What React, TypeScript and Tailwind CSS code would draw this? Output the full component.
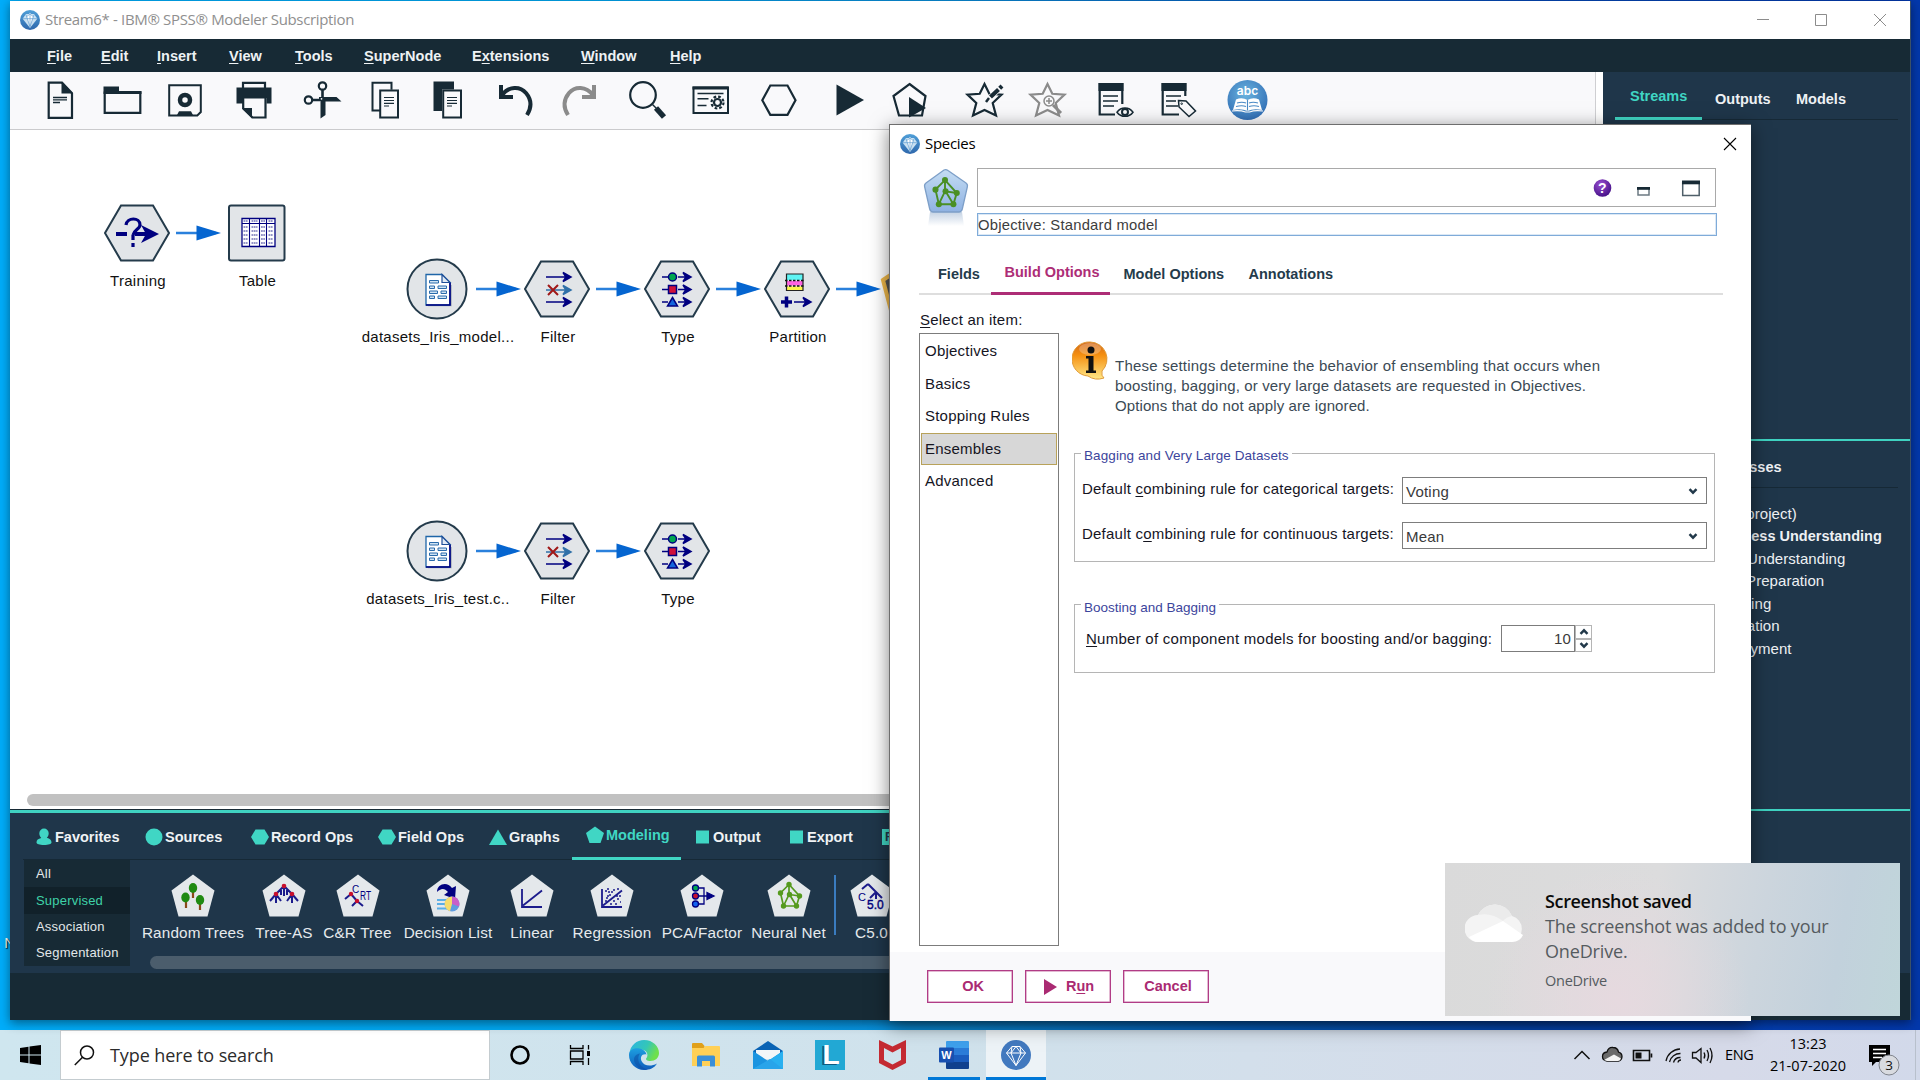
import React from "react";

const INK = "#172a35";
const NAVY = "#000080";
const TEAL = "#40d6c4";
const SANS = "font-['Liberation_Sans',Arial,sans-serif]";
const SEGOE = "font-['Open_Sans','Noto_Sans',sans-serif]";

type Kids = { children?: React.ReactNode };

/* ---------- shared marks ---------- */

function ModelerGem({ size, flat = false }: { size: number; flat?: boolean }) {
  return (
    <svg width={size} height={size} viewBox="0 0 30 30" className="block shrink-0">
      <defs>
        <linearGradient id={flat ? "gemF" : "gemG"} x1="0" y1="0" x2="0" y2="1">
          <stop offset="0" stopColor={flat ? "#4279bf" : "#4f9fd8"} />
          <stop offset="1" stopColor={flat ? "#4279bf" : "#2f68ac"} />
        </linearGradient>
      </defs>
      <circle cx="15" cy="15" r="15" fill={flat ? "url(#gemF)" : "url(#gemG)"} />
      {flat ? (
        <path
          d="M11 6.500h8l5.500 6.500L15 25.500 5.500 13zM5.500 13h19M11 6.500 10 13l5 12.500M19 6.500 20 13l-5 12.500M15 6.500 10 13M15 6.500l5 6.500"
          fill="none"
          stroke="#fff"
          strokeWidth="1"
          strokeLinejoin="round"
        />
      ) : (
        <g>
          <path d="M9 6h12l5 7-11 14L4 13z" fill="#d9ebf7" opacity=".9" />
          <path d="M15 4l5 6-5 14-5-14z" fill="#fff" />
          <path d="M4 13h22M15 5v20M10 10l5-4 5 4M9 7l6 18 6-18" fill="none" stroke="#5c9bd0" strokeWidth="1" />
        </g>
      )}
    </svg>
  );
}

/* ---------- menu bar ---------- */

const menus: { pre?: string; u: string; post: string; w: string }[] = [
  { u: "F", post: "ile", w: "w-[54px]" },
  { u: "E", post: "dit", w: "w-[56px]" },
  { u: "I", post: "nsert", w: "w-[72px]" },
  { u: "V", post: "iew", w: "w-[66px]" },
  { u: "T", post: "ools", w: "w-[69px]" },
  { u: "S", post: "uperNode", w: "w-[108px]" },
  { pre: "E", u: "x", post: "tensions", w: "w-[109px]" },
  { u: "W", post: "indow", w: "w-[89px]" },
  { u: "H", post: "elp", w: "w-[60px]" },
];

function U({ children }: Kids) {
  return <span className="underline decoration-1 underline-offset-2">{children}</span>;
}

function MenuBar() {
  return (
    <nav className={`flex h-[33px] shrink-0 items-center bg-[#172a35] pt-[2px] pl-[37px] text-[14.5px] font-bold text-[#eef2f4] ${SANS}`}>
      {menus.map((m) => (
        <span key={m.u + m.post} className={`${m.w} whitespace-nowrap`}>
          {m.pre}
          <U>{m.u}</U>
          {m.post}
        </span>
      ))}
    </nav>
  );
}

/* ---------- tool bar ---------- */

function Tool({ x, w, children }: { x: number; w: number } & Kids) {
  return (
    <svg width={w} height={57} viewBox={`${x} 72 ${w} 57`} className="block shrink-0" fill="none" stroke={INK} strokeWidth="2.2">
      {children}
    </svg>
  );
}

const starD = (cx: number) =>
  `M${cx} 84l4.800 9.800 12.200.800-8.800 8.400 3.300 12.500-11.500-5.500-11.500 5.500 3.300-12.500-8.800-8.400 12.200-.800z`;

function ToolBar() {
  return (
    <div className="flex h-[58px] border-b border-[#cbcbcd] bg-[#f9f9fb] pl-[20px]">
      <Tool x={30} w={61}>
        <path d="M48.700 82.700H62l10 10.500v24.600H48.700z" />
        <path d="M61.500 82v11.500H73z" fill={INK} stroke="none" />
        <path d="M53 97.500h14M53 99.800h14M53 102.500h7" strokeWidth="1.300" />
      </Tool>
      <Tool x={91} w={62}>
        <path d="M104.700 92.500h35.600v20.300h-35.600z" />
        <path d="M103.500 86.500h15.500v4.500h22.500v3h-38z" fill={INK} stroke="none" />
      </Tool>
      <Tool x={153} w={66}>
        <path d="M169.200 85.200h31.600v26.800l-3.500 3.500h-28.100z" strokeWidth="2" />
        <circle cx="185" cy="100" r="5" strokeWidth="4.500" />
        <path d="M177 115l2-3.800h12l2 3.800z" fill={INK} stroke="none" />
      </Tool>
      <Tool x={219} w={68}>
        <path d="M243 88v-5.200h22V88" />
        <path d="M236.500 87.500h35v16h-5V98h-23.500v5.500h-6.500z" fill={INK} stroke="none" />
        <path d="M243.200 97.500h22.300v20h-13l-9.300-9z" fill="#f9f9fb" />
        <path d="M242 108h10v10.500z" fill={INK} stroke="none" />
      </Tool>
      <Tool x={287} w={66}>
        <circle cx="322.500" cy="86" r="3.700" />
        <circle cx="308.500" cy="100" r="3.700" />
        <path d="M322.500 90v8M312.500 100h8" strokeWidth="2.600" />
        <path d="M319 101v-4h17.500l5 4.500h-16V115l-5 3.500V101z" fill={INK} stroke="none" />
        <circle cx="321.500" cy="98.800" r=".9" fill="#f9f9fb" stroke="none" />
      </Tool>
      <Tool x={353} w={63}>
        <path d="M380 110.500h-7.500V82.700h19v7" strokeWidth="2" />
        <path d="M380.200 90.500h17.800v27h-17.800z" strokeWidth="2" />
        <path d="M384 97.500h10M384 100.500h10M384 103.300h10M384 106h5" strokeWidth="1.200" />
      </Tool>
      <Tool x={416} w={65}>
        <path d="M433.500 81.500h20.500v8h-12v21.500h-8.500z" fill={INK} stroke="none" />
        <path d="M443.200 90.500h17.800v27h-17.800z" strokeWidth="2" />
        <path d="M447 97.500h10M447 100.500h10M447 103.300h10M447 106h5" strokeWidth="1.200" />
      </Tool>
      <Tool x={481} w={65}>
        <path d="M501 85v12h12" strokeWidth="4" />
        <path d="M502 95c7-9 18-9 24-2 5 6 6 14 1 22" strokeWidth="4" />
      </Tool>
      <Tool x={546} w={66}>
        <g stroke="#8b8b8b" strokeWidth="4">
          <path d="M594 85v12h-12" />
          <path d="M593 95c-7-9-18-9-24-2-5 6-6 14-1 22" />
        </g>
      </Tool>
      <Tool x={612} w={66}>
        <circle cx="643" cy="95" r="12.800" strokeWidth="2.200" />
        <path d="M652.500 104.500l4 4" strokeWidth="1.500" />
        <path d="M656 108l8 9" strokeWidth="5.500" />
      </Tool>
      <Tool x={678} w={66}>
        <path d="M693.500 87.500h34.500v25.500h-34.500z" strokeWidth="2" />
        <path d="M692.500 88h36" strokeWidth="3" />
        <path d="M697.500 93.500h26M697.500 98.700h11M697.500 105.500h9" strokeWidth="1.500" />
        <circle cx="717.500" cy="102.500" r="6" strokeWidth="2.200" strokeDasharray="2.700 2" />
        <circle cx="717.500" cy="102.500" r="3.500" strokeWidth="2.200" />
      </Tool>
      <Tool x={744} w={69}>
        <path d="M770.300 85.500h17.200l8 14.700-8 14.700h-17.200l-8-14.700z" />
      </Tool>
      <Tool x={813} w={66}>
        <path d="M836.500 84.500v31L864 100z" fill={INK} stroke="none" />
      </Tool>
      <Tool x={879} w={68}>
        <path d="M909.500 84l16 12-3.500 19.500h-23L893.500 96z" />
        <path d="M909 97v20.500l17-9.500z" fill={INK} stroke="none" />
      </Tool>
      <Tool x={947} w={69}>
        <path d={starD(984.5)} />
        <path d="M988 99.500L998 90" stroke="#f9f9fb" strokeWidth="5.500" />
        <path d="M990.500 97l8-7.500M999.700 88.300l2.300-2.200" strokeWidth="4.200" />
        <path d="M986 102l3-4" strokeWidth="2.500" />
      </Tool>
      <Tool x={1016} w={65}>
        <g stroke="#8b8b8b">
          <path d={starD(1047.5)} strokeWidth="2.200" />
          <circle cx="1049" cy="101" r="5" strokeWidth="1.500" fill="#f9f9fb" />
          <path d="M1046 101h6M1049 98v6" strokeWidth="1.500" />
          <path d="M1053 105l8 8" strokeWidth="3" />
        </g>
      </Tool>
      <Tool x={1081} w={65}>
        <path d="M1115 114.500h-15.300V84h22.600v20" strokeWidth="2.200" />
        <path d="M1098.500 83h25v8h-25z" fill={INK} stroke="none" />
        <path d="M1103 96h15M1103 101h15M1103 106h11" strokeWidth="1.500" />
        <path d="M1117 112.200c4-5.500 12-5.500 16 0-4 5.500-12 5.500-16 0z" strokeWidth="1.500" />
        <circle cx="1125" cy="112" r="3" strokeWidth="2" />
      </Tool>
      <Tool x={1146} w={66}>
        <path d="M1179 114.500h-16.300V84h22.600v12" strokeWidth="2.200" />
        <path d="M1161.500 83h25v8h-25z" fill={INK} stroke="none" />
        <path d="M1166 96h15M1166 101h10M1166 106h12" strokeWidth="1.500" />
        <path d="M1178.500 100.500l7.500.500 9.500 10-6.500 5.500-10-9.500z" strokeWidth="1.500" />
        <circle cx="1181.700" cy="103.700" r=".8" strokeWidth="1" />
      </Tool>
      <Tool x={1212} w={70}>
        <defs>
          <radialGradient id="abc" cx=".45" cy=".35" r=".7">
            <stop offset="0" stopColor="#6ab3de" />
            <stop offset="1" stopColor="#2f6cb4" />
          </radialGradient>
        </defs>
        <circle cx="1247.500" cy="100" r="20" fill="url(#abc)" stroke="none" />
        <text x="1247.500" y="94.500" textAnchor="middle" fontSize="12" fontWeight="600" fontFamily="Inter, sans-serif" fill="#fff" stroke="none">
          abc
        </text>
        <path d="M1236 99.500q6-2.500 11.500.5 5.500-3 11.500-.5l3 10.500q-8-2-14.500 1-6.500-3-14.500-1z" fill="#fff" stroke="none" />
        <path d="M1247.500 100v10.500M1237 103q5-1.500 9 0M1236 106.500q6-1.500 10 0M1249 103q4-1.500 9 0M1249 106.500q5-1.500 10 0" stroke="#4a8ac6" strokeWidth="1.100" />
        <path d="M1232 111q8-1 13.500 1h4q5-2 13.500-1" stroke="#fff" strokeWidth="1.200" />
      </Tool>
    </div>
  );
}

/* ---------- stream canvas ---------- */

function NodeShape({ kind, children }: { kind: "hex" | "square" | "circle" } & Kids) {
  const p = { fill: "#e2e5e8", stroke: "#243b4b", strokeWidth: 2 };
  return (
    <svg width="68" height="64" viewBox="-34 -32 68 64" className="block" fill="none">
      {kind === "hex" && <path d="M-16 -27.500h32l16 27.500-16 27.500h-32l-16-27.500z" {...p} />}
      {kind === "square" && <rect x="-28" y="-27.500" width="55.500" height="55" rx="2" {...p} />}
      {kind === "circle" && <circle r="29.500" {...p} />}
      {children}
    </svg>
  );
}

const rightArrow = (x1: number, x2: number, y: number) =>
  `M${x1} ${y}H${x2 - 2}M${x2 - 8} ${y - 4.5}L${x2} ${y}L${x2 - 8} ${y + 4.5}L${x2 - 5} ${y}Z`;

const glyphs = {
  training: (
    <g stroke={NAVY}>
      <path d="M-21 1h11M-2 1h12" strokeWidth="4" />
      <path d="M-11-8c1-8 14-8 14 0 0 4-6 5-7 10" strokeWidth="3.200" />
      <path d="M-4 2v5M-4 10v4" strokeWidth="3.200" />
      <path d="M4-8L22 1 4 10l5-9z" fill={NAVY} stroke="none" />
    </g>
  ),
  table: (
    <g>
      <path d="M-15-14.500h33v28h-33z" fill="#fff" stroke={NAVY} strokeWidth="1.300" />
      <path d="M-15-9.500h33M-7.500-14.500v28M2.500-14.500v28M9.500-14.500v28" stroke={NAVY} strokeWidth="1.100" />
      {[-12, -6, -2, 2, 6, 10].map((y) => (
        <path key={y} d={`M-13.500 ${y}h4.500M-5.500 ${y}h6M4 ${y}h4M11.500 ${y}h4.500`} stroke="#2a2a90" strokeWidth="1" strokeDasharray="1.800 .500" />
      ))}
    </g>
  ),
  source: (
    <g>
      <path d="M-9 16.500h23V-4" stroke="#a9b0b6" strokeWidth="1.500" />
      <path d="M-11-14.500H5l8 8v22.500h-24z" fill="#fff" stroke="#1f66a8" strokeWidth="1.300" />
      <path d="M13-6.500v22.500h-24" stroke={NAVY} strokeWidth="1.600" />
      <path d="M5-14.500v8h8z" fill="#dfeaf4" stroke="#1f4f98" strokeWidth="1.200" />
      <g fill="#cfe3f3" stroke="#2a6bab" strokeWidth="1">
        <path d="M-7.500-8.500h9v2.500h-9zM-7.500-3h5v2.500h-5zM1-3h8.500v2.500H1zM-7.500 2h8v2.500h-8zM4 2h5.500v2.500H4zM-7.500 7h5v2.500h-5zM1 7h8.500v2.500H1z" />
      </g>
    </g>
  ),
  filter: (
    <g strokeWidth="1.500">
      <path d={rightArrow(-11, 14, -12)} stroke={NAVY} fill={NAVY} />
      <path d={rightArrow(-11, 14, 1)} stroke="#3070a8" fill="#3070a8" />
      <path d={rightArrow(-11, 14, 13)} stroke={NAVY} fill={NAVY} />
      <path d="M-9-4L1 6M1-4L-9 6" stroke="#a01818" strokeWidth="2" />
    </g>
  ),
  type: (
    <g stroke={NAVY} strokeWidth="1.500">
      {[-12, 0.5, 13].map((y) => (
        <path key={y} d={`M-15 ${y}h6${rightArrow(1, 14, y)}`} fill={NAVY} />
      ))}
      <circle cx="-4.500" cy="-12" r="4" fill="#00a650" />
      <path d="M-8.500-3.500h8v8h-8z" fill="#d0103a" />
      <path d="M-4.500 8.500L.5 17h-10z" fill="#1464dc" />
    </g>
  ),
  partition: (
    <g>
      <path d="M-10.500-15h16.500v6h-16.500z" fill="#5ff4f4" />
      <path d="M-10.500-8h16.500v4.500h-16.500z" fill="#ff62e0" />
      <path d="M-10.500-2.500h16.500v4h-16.500z" fill="#fdf54a" />
      <path d="M-10.500-15h16.500V1.500h-16.500z" stroke="#222" strokeWidth="1.200" />
      <path d="M-12-8.500H8M-12-3H8" stroke="#111" strokeWidth="1.300" strokeDasharray="2.500 1.500" />
      <path d="M-16 13h11M-10.500 7.500v11" stroke={NAVY} strokeWidth="3.500" />
      <path d={rightArrow(-3, 14, 13)} stroke={NAVY} strokeWidth="1.500" fill={NAVY} />
    </g>
  ),
};

function StreamNode({ at, kind, label, children }: { at: string; kind: "hex" | "square" | "circle"; label: string } & Kids) {
  return (
    <div className={`absolute flex w-[180px] -translate-x-1/2 flex-col items-center ${at}`}>
      <NodeShape kind={kind}>{children}</NodeShape>
      <span className="mt-[6px] ml-[2px] text-[15px] leading-[20px] tracking-[0.270px] whitespace-nowrap text-[#111]">{label}</span>
    </div>
  );
}

function Link({ at }: { at: string }) {
  return (
    <svg width="46" height="16" viewBox="0 0 46 16" className={`absolute ${at}`}>
      <path d="M0 8h40" stroke="#2a80dc" strokeWidth="2.600" />
      <path d="M20.500.500L45 8 20.500 15.500z" fill="#0565d0" />
    </svg>
  );
}

function Canvas() {
  return (
    <div className={`relative h-[679px] shrink-0 overflow-hidden bg-white ${SANS}`}>
      <StreamNode at="left-[127px] top-[71px]" kind="hex" label="Training">{glyphs.training}</StreamNode>
      <StreamNode at="left-[246.500px] top-[71px]" kind="square" label="Table">{glyphs.table}</StreamNode>
      <Link at="left-[166px] top-[95px]" />
      <StreamNode at="left-[427px] top-[127px]" kind="circle" label="datasets_Iris_model...">{glyphs.source}</StreamNode>
      <StreamNode at="left-[547px] top-[127px]" kind="hex" label="Filter">{glyphs.filter}</StreamNode>
      <StreamNode at="left-[667px] top-[127px]" kind="hex" label="Type">{glyphs.type}</StreamNode>
      <StreamNode at="left-[787px] top-[127px]" kind="hex" label="Partition">{glyphs.partition}</StreamNode>
      <Link at="left-[466px] top-[151px]" />
      <Link at="left-[586px] top-[151px]" />
      <Link at="left-[706px] top-[151px]" />
      <Link at="left-[826px] top-[151px]" />
      <svg width="60" height="60" viewBox="0 0 60 60" className="absolute left-[870px] top-[130px]">
        <path d="M3 20L30 2l27 18-10 38H13z" fill="#555" stroke="#f0b94a" strokeWidth="4" />
      </svg>
      <StreamNode at="left-[427px] top-[389px]" kind="circle" label="datasets_Iris_test.c..">{glyphs.source}</StreamNode>
      <StreamNode at="left-[547px] top-[389px]" kind="hex" label="Filter">{glyphs.filter}</StreamNode>
      <StreamNode at="left-[667px] top-[389px]" kind="hex" label="Type">{glyphs.type}</StreamNode>
      <Link at="left-[466px] top-[413px]" />
      <Link at="left-[586px] top-[413px]" />
      <div className="absolute left-[17px] top-[664px] h-[12px] w-[1500px] rounded-full bg-[#c1c1c1]" />
    </div>
  );
}

/* ---------- node palette ---------- */

function TabGlyph({ kind }: { kind: string }) {
  return (
    <svg width="18" height="18" viewBox="0 0 18 18" fill={TEAL} className="block shrink-0">
      {kind === "person" && <path d="M9 .5a4.700 4.700 0 0 1 4.700 4.700c0 2-1 3.500-1.900 4.600 3 .8 4.700 2 4.700 4.700 0 1.500-3 2.500-7.500 2.500s-7.500-1-7.500-2.500c0-2.700 1.700-3.900 4.700-4.600-.9-1.200-1.900-2.700-1.900-4.700A4.700 4.700 0 0 1 9 .5z" />}
      {kind === "circle" && <circle cx="9" cy="9" r="8.500" />}
      {kind === "hex" && <path d="M4.500 1.500h9L18 9l-4.500 7.500h-9L0 9z" />}
      {kind === "triangle" && <path d="M9 1.500L18 17H0z" />}
      {kind === "pentagon" && <path d="M9 .5l9 6.500-3.500 10h-11L0 7z" />}
      {kind === "square" && <path d="M4 2.500h13v13H4z" />}
    </svg>
  );
}

const paletteTabs = [
  { t: "Favorites", k: "person", w: "w-[110px]" },
  { t: "Sources", k: "circle", w: "w-[106px]" },
  { t: "Record Ops", k: "hex", w: "w-[127px]" },
  { t: "Field Ops", k: "hex", w: "w-[111px]" },
  { t: "Graphs", k: "triangle", w: "w-[97px]" },
  { t: "Modeling", k: "pentagon", w: "w-[106px]" },
  { t: "Output", k: "square", w: "w-[94px]" },
  { t: "Export", k: "square", w: "w-[96px]" },
];

function ModelGlyph({ name }: { name: string }) {
  const red = "#c8102e";
  return (
    <svg width="44" height="44" viewBox="-22 -22 44 44" className="block" fill="none" stroke={NAVY} strokeWidth="1.700">
      <path d="M0-21.500L21.500-5.500 14.500 20.500h-29L-21.500-5.500z" fill="#e4e8eb" stroke="none" />
      {name === "Random Trees" && (
        <g>
          <path d="M0-6v8M-7 4v8M7 6v8" stroke="#8a4a1a" strokeWidth="2.200" />
          <g fill="#1f8a12" stroke="none">
            <ellipse cx="0" cy="-8" rx="4.200" ry="5" />
            <ellipse cx="-7.500" cy="1.500" rx="4.200" ry="5" />
            <ellipse cx="7" cy="4" rx="4.200" ry="5" />
          </g>
        </g>
      )}
      {name === "Tree-AS" && (
        <g>
          <path d="M0-10L-8-2M0-10l8 8M0-10V0M-8-2l-6 7M-8-2l5 7M-8-2v9M8-2L3 5M8-2l6 7M8-2v9M-3-6v5M3-6v5" stroke="#1b1b8c" strokeWidth="2" />
          <g fill={red} stroke="none">
            <circle cx="0" cy="-10" r="2.300" /><circle cx="-8" cy="-2" r="2.300" /><circle cx="8" cy="-2" r="2.300" />
          </g>
        </g>
      )}
      {name === "C&R Tree" && (
        <g>
          <text x="-6" y="-3" fontSize="10" fontFamily="Liberation Sans, sans-serif" fill={NAVY} stroke="none">C</text>
          <text x="2" y="4" fontSize="12" textLength="11" lengthAdjust="spacingAndGlyphs" fontFamily="Liberation Sans, sans-serif" fill={NAVY} stroke="none">RT</text>
          <path d="M-7-2l6 7M-7-2l-6 5M-1 5l-5 5M-1 5l6 5" stroke="#1b1b8c" strokeWidth="2" />
          <g fill={red} stroke="none"><circle cx="-7" cy="-2" r="2.200" /><circle cx="-1" cy="5" r="2.200" /></g>
        </g>
      )}
      {name === "Decision List" && (
        <g stroke="none">
          <path d="M-11-4c0-8 10-11 15-4l4-2-1 13-11-4 4-3c-4-5-8-3-11 0z" fill={NAVY} />
          <path d="M-11 4h9M-11 8h8M-11 12.500h10" stroke="#5aaee6" strokeWidth="2" />
          <circle cx="4" cy="8" r="7.500" fill="#5f9ce0" />
          <path d="M4 8V.5a7.500 7.500 0 0 0-2 14.700z" fill="#f7dc6a" />
          <path d="M4 8V.5a7.500 7.500 0 0 1 7 10z" fill="#c95fc8" />
        </g>
      )}
      {name === "Linear" && <path d="M-10-7v18H10M-9 9.500L10-5.500" strokeWidth="1.800" stroke="#1b1b8c" />}
      {name === "Regression" && (
        <g stroke="#1b1b8c">
          <path d="M-10-7v18H10M-9 9.500L10-5.500" strokeWidth="1.800" />
          <path d="M-7-5h2M-3-1h2M1-6h2M-6 2h2M5 3h2M1 5h2M-2 8h2M5-7h2M7 0h2M-7 5h2M3 8h2M-4-4h2" strokeWidth="1.700" />
          <path d="M-5-7h2M-1-4h2M-5 0h2M4 0h2M8 6h1" strokeWidth="1.500" />
        </g>
      )}
      {name === "PCA/Factor" && (
        <g strokeWidth="1.300">
          <path d="M-6-8h8V8h-8M-6 0h12" />
          <path d="M5-3.500L12 0 5 3.500z" fill={NAVY} />
          <circle cx="-6.500" cy="-8" r="3" fill="#00a650" />
          <circle cx="-6.500" cy="0" r="3" fill={red} />
          <circle cx="-6.500" cy="8" r="3" fill="#1464f0" />
        </g>
      )}
      {name === "Neural Net" && <NetGlyph color="#559a1e" />}
      {name === "C5.0" && (
        <g>
          <path d="M-4-12l-6 5M-4-12l8 8M4-4l-6 6M4-4l6 6M4-4v7" stroke="#1b1b8c" strokeWidth="2" />
          <text x="-14" y="5" fontSize="11" fontFamily="Liberation Sans, sans-serif" fill={NAVY} stroke="none">C</text>
          <text x="-5" y="13" fontSize="12" fontFamily="Liberation Sans, sans-serif" fill={NAVY} stroke={NAVY} strokeWidth=".4">5.0</text>
        </g>
      )}
    </svg>
  );
}

function NetGlyph({ color }: { color: string }) {
  const pts = [[0, -11.5], [-8.5, -3], [0.5, -1.5], [10.5, 0], [-5.5, 10], [7.5, 10]];
  return (
    <g stroke={color} strokeWidth="1.700">
      <path d="M0-11.500L-8.500-3-5.500 10h13L10.500 0zM0-11.500V-1.500L-5.500 10M.5-1.500L7.500 10M.5-1.500l10 1.500" fill="none" />
      {pts.map(([x, y]) => (
        <circle key={`${x}${y}`} cx={x} cy={y} r="2.700" fill={color} stroke="none" />
      ))}
    </g>
  );
}

const paletteNodes = [
  { t: "Random Trees", w: "w-[118px]" },
  { t: "Tree-AS", w: "w-[64px]" },
  { t: "C&R Tree", w: "w-[83px]" },
  { t: "Decision List", w: "w-[98px]" },
  { t: "Linear", w: "w-[70px]" },
  { t: "Regression", w: "w-[90px]" },
  { t: "PCA/Factor", w: "w-[90px]" },
  { t: "Neural Net", w: "w-[83px]" },
];

function PaletteItem({ t, w }: { t: string; w: string }) {
  return (
    <div className={`flex ${w} shrink-0 flex-col items-center`}>
      <ModelGlyph name={t} />
      <span className="mt-[6px] text-[15.300px] leading-[18px] tracking-[0.150px] whitespace-nowrap text-[#e6eaed]">{t}</span>
    </div>
  );
}

function Palette() {
  return (
    <div className={`flex h-[163px] flex-col overflow-hidden border-t-[3px] border-[#3fd2c1] bg-[#1f364a] ${SANS}`}>
      <div className="ml-[13px] flex h-[47px] shrink-0 items-start border-b border-[#162936] pl-[12px] text-[14.500px] font-bold text-[#f0f3f5]">
        {paletteTabs.map((p) => {
          const on = p.t === "Modeling";
          return (
            <div key={p.t} className={`flex shrink-0 ${p.w} relative items-center gap-[2px] whitespace-nowrap ${on ? "pt-[12px] text-[#40d6c4]" : "pt-[14px]"}`}>
              <TabGlyph kind={p.k} />
              <span className={p.k === "square" ? "pl-px leading-[20px]" : "leading-[20px]"}>{p.t}</span>
              {on && <span className="absolute -left-[14px] top-[44px] h-[3px] w-[109px] bg-[#40d6c4]" />}
            </div>
          );
        })}
        <span className="mt-[16px] h-[16px] w-[17px] bg-[#40d6c4] pl-[3px] text-[12px] leading-[17px] text-[#1f364a]">F</span>
      </div>
      <div className="flex flex-1 pl-[14px]">
        <div className="h-[106px] w-[106px] shrink-0 bg-[#172a35] pt-px text-[13px] text-[#e3e8ea]">
          {["All", "Supervised", "Association", "Segmentation"].map((c) => (
            <div key={c} className={`flex h-[26.250px] items-center pl-[12px] tracking-[0.200px] ${c === "Supervised" ? "bg-[#11212a] text-[#3fd2a8]" : ""}`}>{c}</div>
          ))}
        </div>
        <div className="flex min-w-0 flex-1 flex-col">
          <div className="flex h-[96px] pt-[14px] pl-[4px]">
            {paletteNodes.map((n) => (
              <PaletteItem key={n.t} {...n} />
            ))}
            <div className="mt-px ml-[4px] h-[60px] w-[2px] shrink-0 bg-[#3a7cc0]" />
            <PaletteItem t="C5.0" w="w-[71px]" />
          </div>
          <div className="ml-[20px] h-[13px] rounded-full bg-[#4b5d6c]" />
        </div>
      </div>
    </div>
  );
}

/* ---------- right-hand manager panes ---------- */

function SidePanes() {
  return (
    <aside className={`flex w-[307px] shrink-0 flex-col bg-[#1f364a] text-[#eef1f4] ${SANS}`}>
      <div className="mx-[12px] flex h-[48px] shrink-0 items-start border-b border-[#162936] text-[14.500px] font-bold">
        <span className="h-[48px] w-[87px] border-b-[3px] border-[#40d6c4] pt-[14px] pl-[15px] leading-[20px] text-[#40d6c4]">Streams</span>
        <span className="w-[82px] pt-[17px] pl-[13px] leading-[20px]">Outputs</span>
        <span className="pt-[17px] pl-[12px] leading-[20px]">Models</span>
      </div>
      <div className="h-[319px] shrink-0" />
      <div className="h-[372px] shrink-0 border-y-[2px] border-[#3fd2c1] px-[12px]">
        <div className="flex h-[47px] border-b border-[#162936] pt-[16px] text-[14.500px] leading-[20px] font-bold">
          <span className="pl-[14px]">CRISP-DM</span>
          <span className="ml-[26px]">Classes</span>
        </div>
        <div className="pt-[15px] pl-[96px] text-[15px] leading-[22.450px] tracking-[0.050px] whitespace-nowrap">
          <div className="-ml-[31px]">(unsaved project)</div>
          <div className="text-[14.500px] font-bold tracking-normal">Business Understanding</div>
          <div>Data Understanding</div>
          <div className="-ml-px">Data Preparation</div>
          <div className="-ml-px">Modeling</div>
          <div className="-ml-[2px]">Evaluation</div>
          <div>Deployment</div>
        </div>
      </div>
    </aside>
  );
}

function MainWindow() {
  return (
    <section className="relative flex h-[1019px] w-[1901px] flex-col border-r border-[#3c5166] bg-[#172a35] shadow-[0_3px_10px_rgba(0,0,0,0.45)]">
      <header className={`flex h-[38px] shrink-0 items-center bg-white pl-[10px] text-[#8f8f8f] ${SEGOE}`}>
        <ModelerGem size={20} />
        <span className="-mt-[2px] ml-[5px] text-[15px] tracking-[-0.340px]">Stream6* - IBM® SPSS® Modeler Subscription</span>
        <svg width="150" height="20" viewBox="0 0 150 20" className="mr-[14px] ml-auto" fill="none" stroke="#8c8c8c">
          <path d="M11 9.500h12M69.500 4.500h11v11h-11zM128 4l12 12M140 4l-12 12" />
        </svg>
      </header>
      <MenuBar />
      <div className="flex h-[901px]">
        <div className="flex w-[1593px] flex-col">
          <div className="flex h-[738px] overflow-hidden">
            <div className="w-[1586px] border-r border-[#cfcfd2]">
              <ToolBar />
              <Canvas />
            </div>
            <div className="flex-1 bg-white" />
          </div>
          <Palette />
        </div>
        <SidePanes />
      </div>
    </section>
  );
}

/* ---------- Species dialog ---------- */

const Chevron = ({ up = false }: { up?: boolean }) => (
  <svg width="10" height="8" viewBox="0 0 10 8" fill="none" stroke="#22394a" strokeWidth="2.400">
    <path d={up ? "M1.500 5.800L5 2.300l3.500 3.500" : "M1.500 2.200L5 5.700l3.500-3.500"} />
  </svg>
);

function Combo({ value }: { value: string }) {
  return (
    <div className="flex h-[27px] w-[305px] items-center justify-between border border-[#7d7d7d] pr-[8px] pl-[3px] text-[#3a3a3a]">
      <span className="pt-[3px]">{value}</span>
      <Chevron />
    </div>
  );
}

function DialogButton({ children }: Kids) {
  return (
    <button className="flex h-[33px] w-[86px] items-center justify-center border border-[#b13c86] bg-white text-[14.500px] font-bold tracking-normal text-[#aa2a72] shadow-[inset_0_0_0_0.500px_#c873a6]">
      {children}
    </button>
  );
}

function Dialog() {
  return (
    <section className={`absolute top-[124px] left-[889px] flex h-[897px] w-[862px] flex-col border-t border-l border-[#6e6e6e] bg-white text-[15px] tracking-[0.220px] text-[#15151f] shadow-[0_4px_18px_rgba(0,0,0,0.5)] ${SANS}`}>
      <header className={`flex h-[37px] shrink-0 items-center pl-[10px] text-black ${SEGOE}`}>
        <ModelerGem size={20} />
        <span className="ml-[5px] text-[15px] tracking-[-0.300px]">Species</span>
        <svg width="14" height="14" viewBox="0 0 14 14" className="mr-[14px] ml-auto" stroke="#000" strokeWidth="1.100">
          <path d="M1 1l12 12M13 1L1 13" />
        </svg>
      </header>

      <div className="flex h-[74px] shrink-0 pt-[6px] pl-[33px]">
        <svg width="46" height="64" viewBox="0 0 46 64" className="mr-[8px] shrink-0">
          <defs>
            <linearGradient id="pent" x1="0" y1="0" x2="0" y2="1">
              <stop offset="0" stopColor="#c4dcf3" />
              <stop offset="1" stopColor="#8fb2e2" />
            </linearGradient>
            <linearGradient id="refl" x1="0" y1="0" x2="0" y2="1">
              <stop offset="0" stopColor="#c5d3e4" />
              <stop offset="1" stopColor="#fff" />
            </linearGradient>
          </defs>
          <path d="M7 44h32l2 14H5z" fill="url(#refl)" />
          <path d="M21 2q2-1 4 .5L43 15q2 1.500 1.300 4l-5 22q-.8 3-3.500 3H10.200q-2.700 0-3.500-3L1.700 19Q1 16.500 3 15z" fill="url(#pent)" stroke="#7d9fc8" strokeWidth="1.300" />
          <g transform="translate(22 25) scale(1.120)"><NetGlyph color="#4a8f24" /></g>
        </svg>
        <div className="flex flex-col">
          <div className="flex h-[39px] w-[739px] items-center justify-end border border-[#a9a9a9] bg-white pr-[15px]">
            <svg width="102" height="22" viewBox="1598 177 102 22" className="overflow-visible" fill="none">
              <defs>
                <radialGradient id="help" cx=".4" cy=".3" r=".8">
                  <stop offset="0" stopColor="#9a4fd0" />
                  <stop offset="1" stopColor="#3c0a80" />
                </radialGradient>
              </defs>
              <circle cx="1602.500" cy="188" r="8.800" fill="url(#help)" />
              <text x="1602.500" y="193" textAnchor="middle" fontSize="14" fontWeight="bold" fontFamily="Liberation Sans, sans-serif" fill="#fff">?</text>
              <path d="M1638 188v7h11v-7" stroke="#6c7a82" strokeWidth="1.500" />
              <path d="M1637 187h13v2.800h-13z" fill={INK} />
              <path d="M1682.700 182v13.500h16.500V182" stroke="#4f5f69" strokeWidth="1.500" />
              <path d="M1682 180.500h18v3.800h-18z" fill={INK} />
            </svg>
          </div>
          <div className="mt-[6px] flex h-[23px] w-[740px] items-center border border-[#7fabd9] pt-px text-[14.800px] text-[#3d3d3d] shadow-[inset_0_0_0_1px_#dbe8f5]">
            <span>Objective: Standard model</span>
          </div>
        </div>
      </div>

      <div className="ml-[29px] flex h-[59px] w-[804px] shrink-0 items-end border-b-2 border-[#dedede] text-[14.500px] font-bold tracking-normal text-[#243b4b]">
        <span className="w-[72px] pb-[10px] pl-[19px] leading-[18px]">Fields</span>
        <span className="-mb-[2px] w-[119px] border-b-[3px] border-[#ad2d76] pb-[11px] pl-[13.500px] leading-[18px] text-[#ad2d76]">Build Options</span>
        <span className="ml-[13.500px] w-[125px] pb-[10px] leading-[18px]">Model Options</span>
        <span className="pb-[10px] leading-[18px]">Annotations</span>
      </div>

      <div className="flex min-h-0 flex-1 pb-[4px] pl-[29px]">
        <div className="flex w-[140px] flex-col">
          <div className="pt-[16px] pb-[4px] pl-px leading-[18px]"><U>S</U>elect an item:</div>
          <div className="h-[613px] border border-[#7c7c7c] px-px pt-px">
            {["Objectives", "Basics", "Stopping Rules", "Ensembles", "Advanced"].map((t) => (
              <div key={t} className={`flex h-[32.500px] items-center border pl-[3px] ${t === "Ensembles" ? "border-[#b8a25a] bg-[#d7d7d7]" : "border-transparent"}`}>{t}</div>
            ))}
          </div>
        </div>

        <div className="ml-[15px] flex flex-col pt-[46px]">
          <div className="flex -ml-[2px]">
            <svg width="36" height="40" viewBox="0 0 36 40" className="mr-[7px] shrink-0">
              <defs>
                <linearGradient id="info" x1="0" y1="0" x2="0" y2="1">
                  <stop offset="0" stopColor="#d0661c" />
                  <stop offset=".35" stopColor="#f58f10" />
                  <stop offset="1" stopColor="#ffe888" />
                </linearGradient>
              </defs>
              <path d="M18 1a17 17 0 0 1 12 29q-1 5 2 7-9 3-16-2A17 17 0 0 1 18 1z" fill="url(#info)" stroke="#e09a38" strokeWidth="1" />
              <ellipse cx="18" cy="8" rx="11" ry="6" fill="#fff" opacity=".25" />
              <circle cx="19" cy="9" r="3.500" fill="#111" />
              <path d="M14 15h7.500v14.500h2.500V32H14v-2.500h2.500v-12H14z" fill="#111" />
            </svg>
            <div className="pt-[15px] leading-[20px] whitespace-nowrap text-[#3b4a55]">
              <div>These settings determine the behavior of ensembling that occurs when</div>
              <div className="tracking-[0.130px]">boosting, bagging, or very large datasets are requested in Objectives.</div>
              <div className="tracking-[0.100px]">Options that do not apply are ignored.</div>
            </div>
          </div>

          <fieldset className="relative mt-[37px] h-[109px] w-[641px] border border-[#b5b5b5] pl-[7px]">
            <div className="absolute -top-[7px] left-[6px] bg-white px-[3px] text-[13.500px] leading-[18px] tracking-[0.090px] whitespace-nowrap text-[#3c459c]">Bagging and Very Large Datasets</div>
            <div className="mt-[23px] flex h-[27px]">
              <span className="w-[320px] pt-[3px] leading-[18px] whitespace-nowrap">Default <U>c</U>ombining rule for categorical targets:</span>
              <Combo value="Voting" />
            </div>
            <div className="mt-[18px] flex h-[27px]">
              <span className="w-[320px] pt-[3px] leading-[18px] whitespace-nowrap">Default c<U>o</U>mbining rule for continuous targets:</span>
              <Combo value="Mean" />
            </div>
          </fieldset>

          <fieldset className="relative mt-[42px] h-[69px] w-[641px] border border-[#b5b5b5] pl-[11px]">
            <div className="absolute -top-[6px] left-[6px] bg-white px-[3px] text-[13.500px] leading-[18px] whitespace-nowrap text-[#3c459c] tracking-normal">Boosting and Bagging</div>
            <div className="mt-[20px] flex h-[27px] items-center">
              <span className="w-[415px] pt-px tracking-[0.260px] whitespace-nowrap"><U>N</U>umber of component models for boosting and/or bagging:</span>
              <span className="flex h-[27px] w-[74px] items-center justify-end border border-[#7c7c7c] pt-[2px] pr-[3px] text-[#3a3a3a]">10</span>
              <span className="flex h-[27px] w-[17px] flex-col">
                <span className="flex flex-1 items-center justify-center border border-[#b5b5b5]"><Chevron up /></span>
                <span className="flex flex-1 items-center justify-center border border-[#b5b5b5]"><Chevron /></span>
              </span>
            </div>
          </fieldset>
        </div>
      </div>

      <footer className="flex h-[69px] shrink-0 gap-[12px] bg-[#f9f9fb] pt-[18px] pl-[37px]">
        <DialogButton><span className="pl-[6px]">OK</span></DialogButton>
        <DialogButton>
          <svg width="13" height="16" viewBox="0 0 13 16" className="ml-[2px] mr-[9px]"><path d="M0 0v16L13 8z" fill="#aa2a72" /></svg>
          <span>R<U>u</U>n</span>
        </DialogButton>
        <DialogButton><span className="pl-[4px]">Cancel</span></DialogButton>
      </footer>
    </section>
  );
}

/* ---------- notification ---------- */

function Toast() {
  return (
    <section className={`absolute top-[863px] left-[1445px] flex h-[153px] w-[455px] bg-[radial-gradient(circle_at_38%_90%,#e6d9df_0%,rgba(226,218,223,0)_42%),linear-gradient(100deg,#dadada_0%,#dcdcdd_45%,#ccd5dd_68%,#c2d1dc_85%,#c0d6da_100%)] ${SEGOE}`}>
      <svg width="60" height="40" viewBox="0 0 60 40" className="mt-[40px] ml-[20px] shrink-0">
        <path d="M14 39a14 13.500 0 0 1-1-27A18.500 18 0 0 1 47 13 13.500 13.500 0 0 1 47 39z" fill="#f4f4f4" />
        <path d="M13 12A18.500 18 0 0 1 47 13q-6 1-9 5Q26 9 13 12z" fill="#ebebeb" />
        <path d="M4 34L38 18l20 14q-3 7-11 7H14q-7 0-10-5z" fill="#fff" />
      </svg>
      <div className="ml-[20px] whitespace-nowrap text-[#555b60]">
        <div className="mt-[26px] text-[18px] leading-[25px] font-semibold tracking-[-0.350px] text-[#0a0a0a]">Screenshot saved</div>
        <div className="text-[18px] leading-[25px] tracking-[-0.150px]">The screenshot was added to your<br />OneDrive.</div>
        <div className="mt-[8px] text-[14.500px] leading-[18px] tracking-[-0.250px]">OneDrive</div>
      </div>
    </section>
  );
}

/* ---------- task bar ---------- */

function Slot({ w, bar, active, children }: { w: string; bar?: boolean; active?: boolean } & Kids) {
  return (
    <div className={`relative flex h-[50px] shrink-0 items-center justify-center ${w} ${active ? "bg-[#edf3f7]" : ""}`}>
      {children}
      {bar && <span className="absolute inset-x-0 bottom-0 h-[3px] bg-[#0078d7]" />}
    </div>
  );
}

function TaskBar() {
  return (
    <footer className={`flex h-[50px] bg-[linear-gradient(90deg,#cfe6ef_0%,#d0e2ec_50%,#d3dfeb_65%,#d6dae9_90%,#d2d9ea_100%)] text-black ${SEGOE}`}>
      <Slot w="w-[60px]">
        <svg width="21" height="20" viewBox="0 0 21 20"><path d="M0 3l8.500-1.200V9.500H0zM9.500 1.600L21 0v9.500H9.500zM0 10.500h8.500v7.700L0 17zM9.500 10.500H21V20L9.500 18.400z" /></svg>
      </Slot>
      <div className="flex h-[50px] w-[430px] items-center border border-[#c4ccd0] bg-white pl-[13px]">
        <svg width="21" height="21" viewBox="0 0 21 21" fill="none" stroke="#111" strokeWidth="1.500"><circle cx="13" cy="7.500" r="6.500" /><path d="M8.500 12.200L.8 20" /></svg>
        <span className="ml-[15px] text-[18px] tracking-[-0.100px] text-[#2b2b2b]">Type here to search</span>
      </div>
      <Slot w="w-[60px]">
        <svg width="20" height="20" viewBox="0 0 20 20"><circle cx="10" cy="10" r="8.500" fill="none" stroke="#000" strokeWidth="2.600" /></svg>
      </Slot>
      <Slot w="w-[59px]">
        <svg width="22" height="20" viewBox="0 0 22 20" fill="none" stroke="#000" strokeWidth="1.300">
          <path d="M1.500 0v3.500h12.500V0M1.500 6h12.500v8H1.500zM1.500 20v-3.500h12.500V20M19.500 0v4.500M19.500 13v7" />
          <path d="M18 6h3v5h-3z" fill="#000" stroke="none" />
        </svg>
      </Slot>
      <Slot w="w-[69px]">
        <svg width="30" height="30" viewBox="0 0 30 30">
          <defs>
            <linearGradient id="e1" x1="0" y1="0" x2="1" y2=".4"><stop offset="0" stopColor="#2ab4e4" /><stop offset=".6" stopColor="#34c6b8" /><stop offset="1" stopColor="#6fe04c" /></linearGradient>
            <linearGradient id="e2" x1="0" y1="0" x2="0" y2="1"><stop offset="0" stopColor="#1d9fe0" /><stop offset="1" stopColor="#0f5cbc" /></linearGradient>
          </defs>
          <path d="M.5 13A14.700 14.700 0 0 1 15 0c9 0 15 6.500 15 13 0 5-4 8-8.500 8-3.500 0-5.500-1.500-4-3 2-2.500 1-8-5-8.500C6 9 1.500 11 .5 13z" fill="url(#e1)" />
          <path d="M0 15C0 10 5 7.500 10.500 8.500c4 .7 6.500 3 7 6-5-1-6.500 3-5 6.500 2.500 5 9 6 15.500 2.500C25.500 28 20.500 30 15 30 6.500 30 0 23 0 15z" fill="url(#e2)" />
          <path d="M11 13.500c-4 5-1 14 8 16-7 1.500-14-4-14-10 0-3 2.500-5.500 6-6z" fill="#0c4ea4" opacity=".55" />
        </svg>
      </Slot>
      <Slot w="w-[55px]">
        <svg width="28" height="24" viewBox="0 0 28 24">
          <path d="M0 1q0-1 1-1h9l2.500 3v4H0z" fill="#e0a01a" />
          <path d="M0 5h11.500l2-2H27q1 0 1 1v19H0z" fill="#ffd056" />
          <path d="M5 23.500V14q0-1.500 1.500-1.500h15Q23 12.500 23 14v9.500h-5V18h-8v5.500z" fill="#3a8fd8" />
        </svg>
      </Slot>
      <Slot w="w-[70px]">
        <svg width="30" height="28" viewBox="0 0 30 28">
          <path d="M0 10L15 0l15 10v3H0z" fill="#0a63b4" />
          <path d="M3 9h24v9H3z" fill="#f4f6f8" />
          <path d="M0 10l15 10L30 10v18H0z" fill="#1b94e0" />
          <path d="M15 20l15-10v18H12L0 28z" fill="#29b0f0" />
          <path d="M0 28L17 18l13 10z" fill="#28a4ea" />
        </svg>
      </Slot>
      <Slot w="w-[54px]">
        <svg width="30" height="30" viewBox="0 0 30 30">
          <path d="M0 0h30v30H0z" fill="#22a8d4" />
          <text x="5.500" y="25" fontSize="28" fontWeight="bold" fontFamily="Liberation Sans, sans-serif" fill="#0d5a80">L</text>
          <text x="7.500" y="24" fontSize="28" fontWeight="bold" fontFamily="Liberation Sans, sans-serif" fill="#fff">L</text>
        </svg>
      </Slot>
      <Slot w="w-[70px]">
        <svg width="27" height="30" viewBox="0 0 27 30"><path d="M0 0l13.500 6.500L27 0v23l-13.500 7L0 23zM5 8v12l8.500 4.500L22 20V8l-8.500 4.500z" fill="#c42a32" fillRule="evenodd" /></svg>
      </Slot>
      <div className="w-px" />
      <Slot w="w-[52px]" bar>
        <svg width="30" height="28" viewBox="0 0 30 28" className="-ml-px">
          <path d="M7 1q0-1 1-1h21q1 0 1 1v6H7z" fill="#3ea0ec" />
          <path d="M7 7h23v7H7z" fill="#2b7cd8" />
          <path d="M7 14h23v7H7z" fill="#1a5cbe" />
          <path d="M7 21h23v6q0 1-1 1H8q-1 0-1-1z" fill="#10408e" />
          <path d="M0 7.500q0-1 1-1h13q1 0 1 1v13q0 1-1 1H1q-1 0-1-1z" fill="#1850b0" />
          <text x="7.500" y="18" textAnchor="middle" fontSize="11" fontWeight="bold" fontFamily="Liberation Sans, sans-serif" fill="#fff">W</text>
        </svg>
      </Slot>
      <div className="w-[6px]" />
      <Slot w="w-[60px]" bar active><ModelerGem size={30} flat /></Slot>

      <div className="ml-auto flex items-center">
        <svg width="154" height="24" viewBox="1570 1043 154 24" fill="none" stroke="#111" strokeWidth="1.300">
          <path d="M1574.500 1059l7.500-7.500 7.500 7.500" strokeWidth="1.500" />
          <path d="M1607 1061q-4.500-.5-4.500-4.500t4.500-4.500q1.500-5 6-4.500 4.500 0 5.500 4.500 3.500 1 3.500 4.500t-3.500 4.500z" fill="#6a6a6a" />
          <path d="M1604 1060l10-5.500 7 4q-1 2.500-3 2.500h-11z" fill="#f4f4f4" stroke="none" />
          <path d="M1633.500 1050.500h16v10h-16zM1651.500 1053.500v4" strokeWidth="1.600" />
          <path d="M1635.500 1052.500h6v6h-6z" fill="#111" stroke="none" />
          <path d="M1666 1061a15 15 0 0 1 14-12M1669.500 1062a11 11 0 0 1 11-8.500M1673.500 1062.500a7 7 0 0 1 7-5M1678 1062.500a3 3 0 0 1 3-2.500" />
          <path d="M1692.500 1052.500h3.500l5-4v14l-5-4.500h-3.500zM1704 1052.500q1.700 3 0 6M1707 1050q3 5.500 0 11M1710 1048q4 7.500 0 15" />
        </svg>
        <span className="w-[45px] pl-px text-[14.500px] tracking-[-0.300px]">ENG</span>
        <div className="w-[78px] text-center text-[14.500px] leading-[22.500px] tracking-[0.050px]">13:23<br />21-07-2020</div>
        <div className="relative ml-[22px] h-[50px] w-[46px]">
          <svg width="32" height="34" viewBox="1869 1043 32 34" className="absolute top-[13px] left-0">
            <path d="M1869 1045h21v17h-14l-4 4v-4h-3z" fill="#000" />
            <path d="M1873 1049.500h13M1873 1053.500h13M1873 1057.500h9" stroke="#fff" strokeWidth="1.300" />
            <circle cx="1889" cy="1065" r="10" fill="#d9dbe0" stroke="#80848c" />
            <text x="1889" y="1070" textAnchor="middle" fontSize="13.500" fontFamily="Open Sans, sans-serif" fill="#111">3</text>
          </svg>
        </div>
        <div className="h-[50px] w-[5px] border-l border-[#b8c0cc]" />
      </div>
    </footer>
  );
}

export default function App() {
  return (
    <main className="relative flex h-[1080px] w-[1920px] flex-col overflow-hidden bg-[linear-gradient(90deg,#00adfa_0%,#00a6ef_30%,#0a8ad6_50%,#0560c0_65%,#0446b4_80%,#0338ac_100%)]">
      <span className={`absolute top-[931px] left-[4px] text-[15px] text-white [text-shadow:1px_1px_1px_#000] ${SEGOE}`}>N</span>
      <div className="h-[1030px] pt-px pl-[10px]">
        <MainWindow />
      </div>
      <TaskBar />
      <Dialog />
      <Toast />
    </main>
  );
}
